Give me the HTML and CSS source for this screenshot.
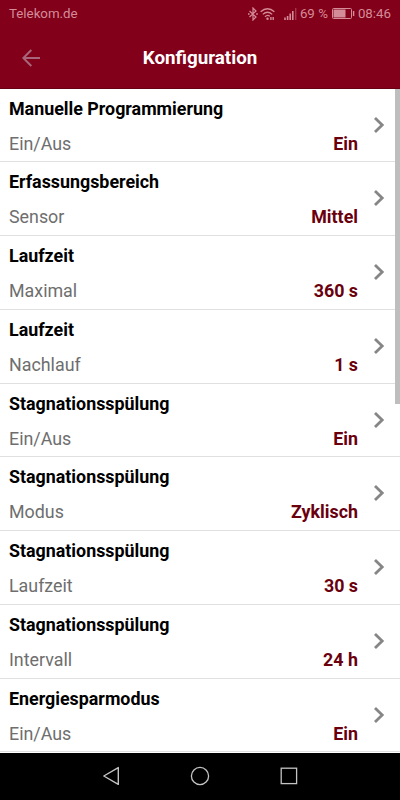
FILE: index.html
```html
<!DOCTYPE html>
<html lang="de">
<head>
    <meta charset="UTF-8">
    <meta name="viewport" content="width=device-width, initial-scale=1.0">
    <title>Konfiguration</title>
    <link rel="stylesheet" href="styles.css">
</head>
<body>
    <svg width="0" height="0" class="symbols">
        <symbol id="chevron" viewBox="0 0 12 18">
            <path d="M2 2 L9.2 9 L2 16" fill="none" stroke="#868686" stroke-width="2.8"/>
        </symbol>
    </svg>

    <header class="header">
        <div class="status-bar">
            <span class="carrier">Telekom.de</span>
            <div class="status-icons">
                <svg class="bluetooth" width="10" height="14" viewBox="0 0 10 14">
                    <path d="M1.5 4 L8 10 L5 13 V1 L8 4 L1.5 10" fill="none" stroke="currentColor" stroke-width="1.2"/>
                    <path d="M0 7h1.6M8.2 7h1.6" stroke="currentColor" stroke-width="1.3"/>
                </svg>
                <svg class="wifi" width="16" height="14" viewBox="0 0 16 14">
                    <g fill="none" stroke="currentColor" stroke-width="1.3">
                        <path d="M0.6 4.8 Q7.5 -1.2 14.4 4.8"/>
                        <path d="M2.8 7.4 Q7.5 3 12.2 7.4"/>
                        <path d="M5 9.8 Q7.5 7.2 9.8 9.2"/>
                    </g>
                    <circle cx="7.5" cy="11.8" r="1.2" fill="currentColor"/>
                    <path d="M10.9 10v3M13.2 10v3" stroke="currentColor" stroke-width="1.4"/>
                </svg>
                <svg class="signal" width="13" height="12" viewBox="0 0 13 12">
                    <path d="M1 9.5v2.5M3.6 8v4M6.2 5.5v6.5M8.8 3v9" stroke="currentColor" stroke-width="1.6"/>
                    <path d="M11.7 0v12" stroke="currentColor" stroke-width="1.4" opacity="0.4"/>
                </svg>
                <span class="percent">69 %</span>
                <svg class="battery" width="23" height="11" viewBox="0 0 23 11">
                    <rect x="0.5" y="0.5" width="19" height="10" rx="1" fill="none" stroke="currentColor"/>
                    <rect x="1.5" y="1.5" width="12" height="8" fill="currentColor"/>
                    <path d="M21.6 3v5" stroke="currentColor" stroke-width="1.4"/>
                </svg>
                <span class="clock">08:46</span>
            </div>
        </div>
        <div class="toolbar">
            <svg class="back" width="18" height="18" viewBox="0 0 18 18">
                <path d="M18 9H1.5M9.3 1 L1.3 9 L9.3 17" fill="none" stroke="#a8667a" stroke-width="2"/>
            </svg>
            <h1>Konfiguration</h1>
        </div>
    </header>

    <main class="list">
        <div class="row">
            <h2>Manuelle Programmierung</h2>
            <span class="label">Ein/Aus</span>
            <span class="value">Ein</span>
            <svg class="chevron"><use href="#chevron"/></svg>
        </div>
        <div class="row">
            <h2>Erfassungsbereich</h2>
            <span class="label">Sensor</span>
            <span class="value">Mittel</span>
            <svg class="chevron"><use href="#chevron"/></svg>
        </div>
        <div class="row">
            <h2>Laufzeit</h2>
            <span class="label">Maximal</span>
            <span class="value">360 s</span>
            <svg class="chevron"><use href="#chevron"/></svg>
        </div>
        <div class="row">
            <h2>Laufzeit</h2>
            <span class="label">Nachlauf</span>
            <span class="value">1 s</span>
            <svg class="chevron"><use href="#chevron"/></svg>
        </div>
        <div class="row">
            <h2>Stagnationsspülung</h2>
            <span class="label">Ein/Aus</span>
            <span class="value">Ein</span>
            <svg class="chevron"><use href="#chevron"/></svg>
        </div>
        <div class="row">
            <h2>Stagnationsspülung</h2>
            <span class="label">Modus</span>
            <span class="value">Zyklisch</span>
            <svg class="chevron"><use href="#chevron"/></svg>
        </div>
        <div class="row">
            <h2>Stagnationsspülung</h2>
            <span class="label">Laufzeit</span>
            <span class="value">30 s</span>
            <svg class="chevron"><use href="#chevron"/></svg>
        </div>
        <div class="row">
            <h2>Stagnationsspülung</h2>
            <span class="label">Intervall</span>
            <span class="value">24 h</span>
            <svg class="chevron"><use href="#chevron"/></svg>
        </div>
        <div class="row">
            <h2>Energiesparmodus</h2>
            <span class="label">Ein/Aus</span>
            <span class="value">Ein</span>
            <svg class="chevron"><use href="#chevron"/></svg>
        </div>
        <div class="scrollbar"></div>
    </main>

    <nav class="nav-bar">
        <svg width="18" height="20" viewBox="0 0 18 20">
            <path d="M16.3 1.6 V18.4 L1.8 10 Z" fill="none" stroke="#c4c4c4" stroke-width="1.4" stroke-linejoin="round"/>
        </svg>
        <svg width="20" height="20" viewBox="0 0 20 20">
            <circle cx="10" cy="10" r="8.6" fill="none" stroke="#c4c4c4" stroke-width="1.3"/>
        </svg>
        <svg width="18" height="20" viewBox="0 0 18 20">
            <rect x="1.2" y="2.2" width="15.4" height="15.4" fill="none" stroke="#c4c4c4" stroke-width="1.3"/>
        </svg>
    </nav>
</body>
</html>
```
FILE: styles.css
```css
* {
    margin: 0;
    padding: 0;
    box-sizing: border-box;
}

body {
    width: 400px;
    height: 800px;
    display: flex;
    flex-direction: column;
    overflow: hidden;
    background-color: #ffffff;
    font-family: Roboto, sans-serif;
}

svg {
    display: block;
    flex-shrink: 0;
}

.symbols {
    position: absolute;
}

.header {
    height: 88.5px;
    background-color: #820019;
    border-bottom: 1px solid #6a0014;
}

/* Statusleiste */
.status-bar {
    height: 27px;
    padding: 0 9px;
    display: flex;
    align-items: center;
    justify-content: space-between;
    color: #d58c99;
    font-size: 13.3px;
}

.status-icons {
    display: flex;
    align-items: center;
}

.wifi {
    margin-left: 2px;
}

.signal {
    margin-left: 8px;
}

.percent {
    margin-left: 3px;
}

.battery {
    margin: 0 3px 0 4px;
}

.toolbar {
    height: 61px;
    padding: 1px 22px 0;
    display: grid;
    grid-template-columns: 18px 1fr 18px;
    align-items: center;
}

.toolbar h1 {
    color: #ffffff;
    font-size: 18.8px;
    font-weight: 700;
    line-height: 24px;
    text-align: center;
}

/* Liste */
.list {
    position: relative;
    height: 664.25px;
}

.row {
    height: 73.75px;
    padding: 8px 15px 0 9px;
    display: grid;
    grid-template-columns: auto 1fr 12px;
    grid-template-rows: 24px 11px 24px;
    column-gap: 15px;
    border-bottom: 1px solid #e0e0e0;
    font-size: 17.85px;
    line-height: 24px;
}

.row h2 {
    grid-area: 1 / 1 / 2 / 3;
    color: #000000;
    font-size: 17.85px;
    font-weight: 700;
}

.label {
    grid-area: 3 / 1;
    color: #6e6e6e;
}

.value {
    grid-area: 3 / 2;
    color: #6a000e;
    font-weight: 700;
    text-align: right;
}

.chevron {
    grid-area: 1 / 3 / 4 / 4;
    align-self: center;
    width: 12px;
    height: 18px;
    margin-bottom: 3px;
}

.scrollbar {
    position: absolute;
    top: 0;
    right: 0;
    width: 5px;
    height: 315px;
    background-color: #bebebe;
}

.nav-bar {
    flex: 1;
    display: flex;
    align-items: center;
    justify-content: center;
    gap: 70px;
    background-color: #000000;
}
```
